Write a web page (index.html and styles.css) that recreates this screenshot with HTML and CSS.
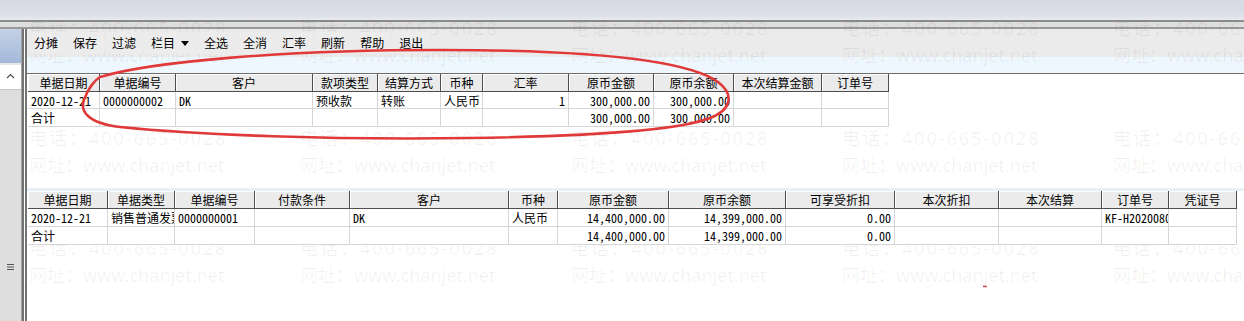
FILE: index.html
```html
<!DOCTYPE html>
<html lang="zh-CN">
<head>
  <meta charset="UTF-8" />
  <title>核销</title>
  <link rel="stylesheet" href="styles.css">
</head>
<body>

<div class="titlebar"></div>
<div class="frame-top"></div>

<div class="workspace">
  <div class="side">
    <div class="side-head"></div>
    <div class="side-body">
      <div class="up-btn">
        <svg width="9" height="6" viewBox="0 0 9 6"><polyline points="1,5 4.5,1.5 8,5" fill="none" stroke="#4a4a4a" stroke-width="1.2"/></svg>
      </div>
      <div class="grip">
        <svg width="7" height="8" viewBox="0 0 7 8"><path d="M0 1.5H7M0 4H7M0 6.5H7" stroke="#555" stroke-width="1.2"/></svg>
      </div>
    </div>
  </div>

  <div class="main">
    <div class="toolbar">
      <span class="tool">分摊</span>
      <span class="tool">保存</span>
      <span class="tool">过滤</span>
      <span class="tool tool-drop">栏目<i class="caret"></i></span>
      <span class="tool">全选</span>
      <span class="tool">全消</span>
      <span class="tool">汇率</span>
      <span class="tool">刷新</span>
      <span class="tool">帮助</span>
      <span class="tool">退出</span>
    </div>

    <div class="grid-wrap">
      <div class="grid grid-one">
        <span class="hd">单据日期</span>
        <span class="hd">单据编号</span>
        <span class="hd">客户</span>
        <span class="hd">款项类型</span>
        <span class="hd">结算方式</span>
        <span class="hd">币种</span>
        <span class="hd">汇率</span>
        <span class="hd">原币金额</span>
        <span class="hd">原币余额</span>
        <span class="hd">本次结算金额</span>
        <span class="hd">订单号</span>

        <span>2020-12-21</span>
        <span>0000000002</span>
        <span>DK</span>
        <span>预收款</span>
        <span>转账</span>
        <span>人民币</span>
        <span class="num">1</span>
        <span class="num">300,000.00</span>
        <span class="num">300,000.00</span>
        <span></span>
        <span></span>

        <span>合计</span>
        <span></span>
        <span></span>
        <span></span>
        <span></span>
        <span></span>
        <span></span>
        <span class="num">300,000.00</span>
        <span class="num">300,000.00</span>
        <span></span>
        <span></span>
      </div>
    </div>

    <div class="split"></div>

    <div class="grid grid-two">
      <span class="hd">单据日期</span>
      <span class="hd">单据类型</span>
      <span class="hd">单据编号</span>
      <span class="hd">付款条件</span>
      <span class="hd">客户</span>
      <span class="hd">币种</span>
      <span class="hd">原币金额</span>
      <span class="hd">原币余额</span>
      <span class="hd">可享受折扣</span>
      <span class="hd">本次折扣</span>
      <span class="hd">本次结算</span>
      <span class="hd">订单号</span>
      <span class="hd">凭证号</span>

      <span>2020-12-21</span>
      <span>销售普通发票</span>
      <span>0000000001</span>
      <span></span>
      <span>DK</span>
      <span>人民币</span>
      <span class="num">14,400,000.00</span>
      <span class="num">14,399,000.00</span>
      <span class="num">0.00</span>
      <span></span>
      <span></span>
      <span>KF-H20200801</span>
      <span></span>

      <span>合计</span>
      <span></span>
      <span></span>
      <span></span>
      <span></span>
      <span></span>
      <span class="num">14,400,000.00</span>
      <span class="num">14,399,000.00</span>
      <span class="num">0.00</span>
      <span></span>
      <span></span>
      <span></span>
      <span></span>
    </div>
  </div>
</div>

<!-- watermark sits under the grids and buttons, over the panel backgrounds -->
<div class="watermark">
  <div><p class="tel">电话：400-665-0028</p><p>网址：www.chanjet.net</p></div>
  <div><p class="tel">电话：400-665-0028</p><p>网址：www.chanjet.net</p></div>
  <div><p class="tel">电话：400-665-0028</p><p>网址：www.chanjet.net</p></div>
  <div><p class="tel">电话：400-665-0028</p><p>网址：www.chanjet.net</p></div>
  <div><p class="tel">电话：400-665-0028</p><p>网址：www.chanjet.net</p></div>
  <div><p class="tel">电话：400-665-0028</p><p>网址：www.chanjet.net</p></div>
  <div><p class="tel">电话：400-665-0028</p><p>网址：www.chanjet.net</p></div>
  <div><p class="tel">电话：400-665-0028</p><p>网址：www.chanjet.net</p></div>
  <div><p class="tel">电话：400-665-0028</p><p>网址：www.chanjet.net</p></div>
  <div><p class="tel">电话：400-665-0028</p><p>网址：www.chanjet.net</p></div>
  <div><p class="tel">电话：400-665-0028</p><p>网址：www.chanjet.net</p></div>
  <div><p class="tel">电话：400-665-0028</p><p>网址：www.chanjet.net</p></div>
  <div><p class="tel">电话：400-665-0028</p><p>网址：www.chanjet.net</p></div>
  <div><p class="tel">电话：400-665-0028</p><p>网址：www.chanjet.net</p></div>
  <div><p class="tel">电话：400-665-0028</p><p>网址：www.chanjet.net</p></div>
</div>

<!-- hand-drawn red loop around the first grid -->
<svg class="pen" width="1244" height="321" viewBox="0 0 1244 321">
  <path d="M100,77 C150,62 280,50 440,50 C600,50 690,62 718,82 C735,95 731,110 710,118 C680,130 600,136 470,138 C330,140 200,135 120,127 C86,123 80,110 84,100 C88,88 95,80 100,77"
        fill="none" stroke="#e0393a" stroke-width="2.6" stroke-linecap="round"/>
  <path d="M983,286.5H987" stroke="#c8433f" stroke-width="1.4"/>
</svg>

</body>
</html>
```

FILE: styles.css
```css
body {
  margin: 0;
  width: 1244px;
  height: 321px;
  overflow: hidden;
  position: relative;
  background: #fff;
  font-family: "Noto Sans CJK SC", sans-serif;
  font-size: 12px;
  color: #000;
}

.titlebar {
  height: 20px;
  background: linear-gradient(#d5d8e2, #dee1e9 80%, #e9ebf0);
}
.frame-top {
  height: 9px;
  box-sizing: border-box;
  border-top: 2px solid #8b8b8b;
  border-bottom: 2px solid #9a9a9a;
  background: #dedede;
}

.workspace {
  display: flex;
  height: 292px;
}

/* left collapsed navigator */
.side {
  width: 21px;
  border-right: 1px solid #a3a3a3;
  display: flex;
  flex-direction: column;
}
.side-head {
  height: 34px;
  background: linear-gradient(#c4d2e7, #a3b8d9);
}
.side-body {
  flex: 1;
  background: #dedede;
  display: flex;
  flex-direction: column;
  align-items: center;
}
.up-btn {
  width: 21px;
  height: 27px;
  box-sizing: border-box;
  background: #fff;
  border-top: 2px solid #e6e6e6;
  border-bottom: 1px solid #c4c4c4;
  display: flex;
  justify-content: center;
  padding-top: 8px;
}
.grip {
  margin-top: auto;
  margin-bottom: 50px;
  line-height: 0;
}

.main {
  flex: 1;
  border-left: 5px double #737373;
  background: linear-gradient(#ebebeb 0 28px, #eef7fd 28px 44px, #fff 44px);
  background-clip: padding-box;
}

.toolbar {
  height: 28px;
  display: flex;
  align-items: center;
}
.tool {
  position: relative;
  z-index: 2;
  background: #ececec;
  padding: 3px 7px;
  line-height: 16px;
  margin-right: 1px;
  display: flex;
  align-items: center;
}
.caret {
  margin-left: 6px;
  width: 0;
  height: 0;
  border-left: 4px solid transparent;
  border-right: 4px solid transparent;
  border-top: 5px solid #000;
}

.grid-wrap {
  margin-top: 16px;
  border-top: 1px solid #6d6d6d;
}

.grid {
  position: relative;
  z-index: 2;
  display: grid;
  width: max-content;
  margin-left: 1px;
  font-family: "Noto Sans Mono CJK SC", "Noto Sans CJK SC", monospace;
  font-size: 12px;
}
.grid-one {
  grid-template-columns: 72px 76px 137px 65px 63px 42px 86px 85px 80px 88px 67px;
  grid-template-rows: 18px 17px 18px;
}
.grid-two {
  grid-template-columns: 80px 67px 80px 95px 159px 49px 111px 117px 109px 104px 103px 67px 68px;
  grid-template-rows: 18px 18px 18px;
}
.grid span {
  box-sizing: border-box;
  background: #fff;
  border-right: 1px solid #d6d6d6;
  border-bottom: 1px solid #d6d6d6;
  padding: 0 3px;
  line-height: 17px;
  white-space: nowrap;
  overflow: hidden;
}
.grid .hd {
  background: #ebebeb;
  border-color: #4e4e4e;
  box-shadow: inset 1px 1px #fff;
  text-align: center;
}
.grid .num {
  text-align: right;
}

.split {
  height: 3px;
  margin-top: 61px;
  background: #e8f1fa;
}

.watermark {
  position: absolute;
  left: 29px;
  top: 15px;
  right: 0;
  bottom: 0;
  overflow: hidden;
  z-index: 1;
  display: grid;
  grid-template-columns: repeat(5, 271px);
  grid-auto-rows: 110px;
  font-family: "Noto Sans", "Noto Sans CJK SC", sans-serif;
  font-size: 18px;
  line-height: 27px;
  color: rgba(0, 0, 0, 0.06);
  white-space: nowrap;
  pointer-events: none;
}
.watermark p {
  margin: 0;
}
.watermark .tel {
  letter-spacing: 2px;
}

.pen {
  position: absolute;
  left: 0;
  top: 0;
  z-index: 3;
  pointer-events: none;
}
```
